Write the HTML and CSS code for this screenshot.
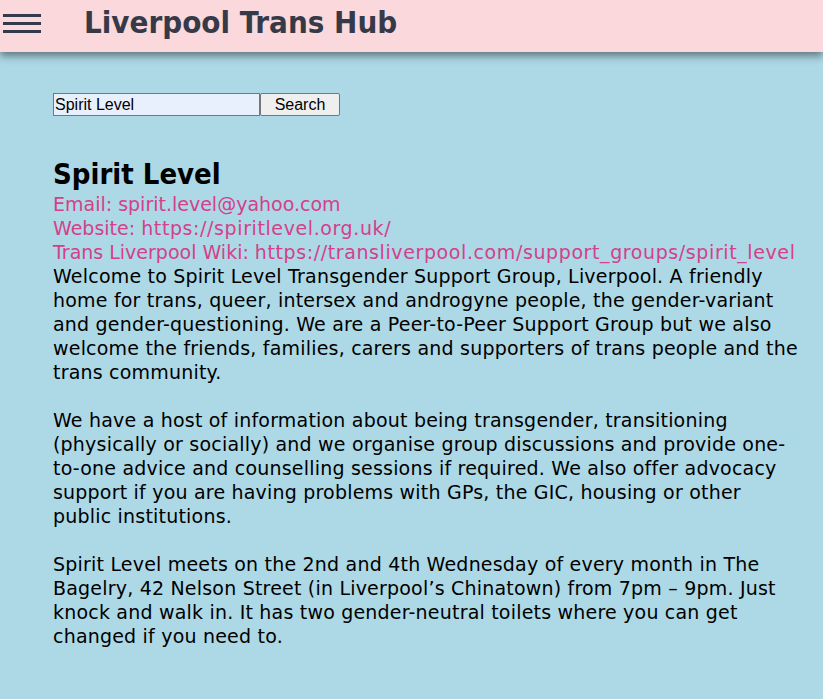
FILE: index.html
```html
<!DOCTYPE html>
<html>
<head>
<meta charset="utf-8">
<link rel="stylesheet" href="styles.css">
</head>
<body>
<header class="topbar">
  <div class="burger"><span></span><span></span><span></span></div>
  <h1 class="title">Liverpool Trans Hub</h1>
</header>
<main class="content">
  <form class="search">
    <input class="search-input" type="text" value="Spirit Level"><button class="search-btn" type="button">Search</button>
  </form>
  <section class="group">
    <h2 class="group-name">Spirit Level</h2>
    <a class="link" href="#">Email: spirit.level@yahoo.com</a>
    <a class="link" href="#">Website: <span class="url">https://spiritlevel.org.uk/</span></a>
    <a class="link" href="#">Trans Liverpool Wiki: <span class="url">https://transliverpool.com/support_groups/spirit_level</span></a>
    <p class="desc">Welcome to Spirit Level Transgender Support Group, Liverpool. A friendly home for trans, queer, intersex and androgyne people, the gender-variant and gender-questioning. We are a Peer-to-Peer Support Group but we also welcome the friends, families, carers and supporters of trans people and the trans community.<br><br>We have a host of information about being transgender, transitioning (physically or socially) and we organise group discussions and provide one-to-one advice and counselling sessions if required. We also offer advocacy support if you are having problems with GPs, the GIC, housing or other public institutions.<br><br>Spirit Level meets on the 2nd and 4th Wednesday of every month in The Bagelry, 42 Nelson Street (in Liverpool’s Chinatown) from 7pm – 9pm. Just knock and walk in. It has two gender-neutral toilets where you can get changed if you need to.</p>
  </section>
</main>
</body>
</html>
```
FILE: styles.css
```css
html, body {
  margin: 0;
  padding: 0;
}
body {
  background: #add8e6;
  font-family: "DejaVu Sans", sans-serif;
  min-height: 699px;
}
.topbar {
  display: flex;
  align-items: flex-start;
  height: 52px;
  background: #fad8dc;
  box-shadow: 0 4px 8px rgba(0,0,0,0.45);
}
.burger {
  display: flex;
  flex-direction: column;
  gap: 5px;
  width: 38px;
  margin: 14px 0 0 3px;
}
.burger span {
  display: block;
  height: 3px;
  background: #343a4a;
}
.title {
  margin: 4px 0 0 43px;
  font-family: "DejaVu Sans Condensed", "DejaVu Sans", sans-serif;
  font-size: 31px;
  font-weight: bold;
  color: #363a48;
  line-height: 36px;
}
.content {
  padding: 41px 0 0 53px;
}
.search {
  display: flex;
  margin: 0;
}
.search-input {
  width: 207px;
  height: 23px;
  box-sizing: border-box;
  border: 1px solid #767676;
  background: #e8f0fe;
  font-family: "Liberation Sans", Arial, sans-serif;
  font-size: 16px;
  padding: 0 1px;
  margin: 0;
}
.search-btn {
  width: 80px;
  height: 23px;
  box-sizing: border-box;
  border: 1px solid #767676;
  background: #efefef;
  font-family: "Liberation Sans", Arial, sans-serif;
  font-size: 16px;
  padding: 0;
  margin: 0;
  border-radius: 2px;
}
.group {
  margin-top: 41px;
  width: 752px;
}
.group-name {
  margin: 0;
  font-family: "DejaVu Sans Condensed", "DejaVu Sans", sans-serif;
  font-size: 29px;
  line-height: 35px;
  color: #000;
}
.link {
  display: block;
  color: #d4408a;
  text-decoration: none;
  font-size: 19px;
  line-height: 24px;
}
.url {
  letter-spacing: 0.6px;
}
.desc {
  margin: 0;
  font-size: 19px;
  line-height: 24px;
  letter-spacing: 0.2px;
  color: #000;
}
```
